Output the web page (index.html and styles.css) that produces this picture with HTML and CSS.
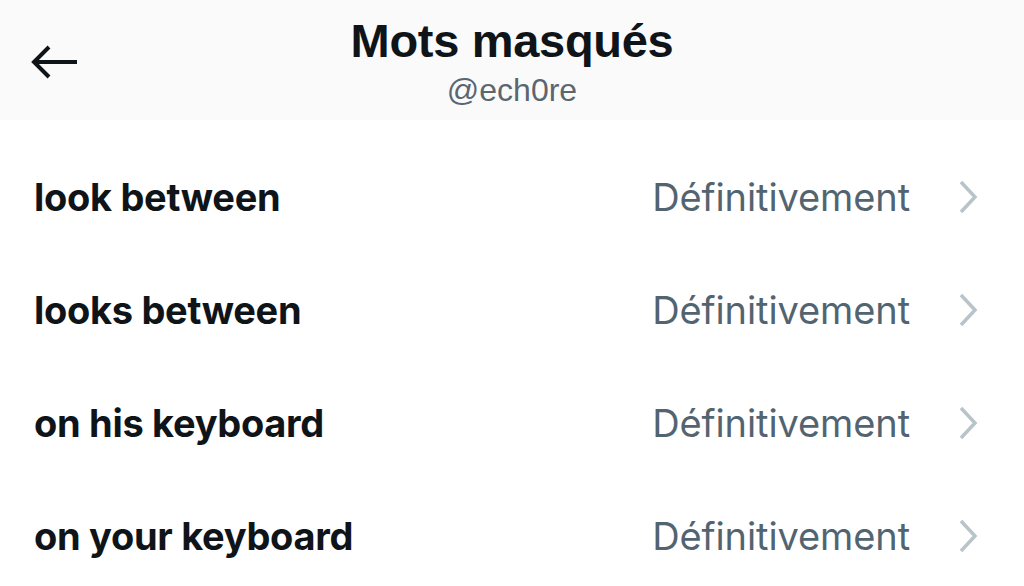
FILE: index.html
```html
<!DOCTYPE html>
<html lang="fr">
<head>
<meta charset="utf-8">
<link rel="stylesheet" href="styles.css">
</head>
<body>
<header class="header">
  <div class="back">
    <svg width="50" height="34" viewBox="0 0 50 34" fill="none" stroke="#0f1419" stroke-width="4" stroke-linecap="butt">
      <path d="M47 17H5"/>
      <path d="M19 2L4 17L19 32"/>
    </svg>
  </div>
  <div class="titles">
    <div class="title">Mots masqués</div>
    <div class="handle">@ech0re</div>
  </div>
  <div class="spacer"></div>
</header>
<main class="list">
  <div class="row"><span class="word">look between</span><span class="dur">Définitivement</span><span class="chev"><svg width="20" height="34" viewBox="0 0 20 34" fill="none" stroke="#b9c3ca" stroke-width="3.5"><path d="M3 2L17 17L3 32"/></svg></span></div>
  <div class="row"><span class="word">looks between</span><span class="dur">Définitivement</span><span class="chev"><svg width="20" height="34" viewBox="0 0 20 34" fill="none" stroke="#b9c3ca" stroke-width="3.5"><path d="M3 2L17 17L3 32"/></svg></span></div>
  <div class="row"><span class="word">on his keyboard</span><span class="dur">Définitivement</span><span class="chev"><svg width="20" height="34" viewBox="0 0 20 34" fill="none" stroke="#b9c3ca" stroke-width="3.5"><path d="M3 2L17 17L3 32"/></svg></span></div>
  <div class="row"><span class="word">on your keyboard</span><span class="dur">Définitivement</span><span class="chev"><svg width="20" height="34" viewBox="0 0 20 34" fill="none" stroke="#b9c3ca" stroke-width="3.5"><path d="M3 2L17 17L3 32"/></svg></span></div>
</main>
</body>
</html>
```
FILE: styles.css
```css
html, body {
  margin: 0;
  padding: 0;
  background: #ffffff;
  width: 1024px;
  height: 586px;
  overflow: hidden;
}
body {
  font-family: "Liberation Sans", Arial, sans-serif;
  color: #0f1419;
}
.header {
  height: 120px;
  background: #fafafa;
  display: grid;
  grid-template-columns: 200px 1fr 200px;
  align-items: start;
}
.back {
  padding-left: 30px;
  padding-top: 45px;
  display: flex;
  align-items: center;
}
.titles {
  display: flex;
  flex-direction: column;
  align-items: center;
  padding-top: 15px;
}
.title {
  font-weight: 700;
  font-size: 47px;
  line-height: 52px;
  letter-spacing: -0.3px;
}
.handle {
  font-size: 32px;
  line-height: 36px;
  margin-top: 5px;
  color: #5b6670;
}
.list {
  padding-top: 20px;
}
.row {
  height: 113px;
  display: flex;
  align-items: center;
  padding: 0 46px 0 34px;
}
.word {
  flex: 1;
  font-family: "Inter", "Liberation Sans", sans-serif;
  font-weight: 700;
  font-size: 38px;
  letter-spacing: -0.3px;
}
.dur {
  font-family: "Inter", "Liberation Sans", sans-serif;
  font-size: 38px;
  color: #536471;
  letter-spacing: -0.1px;
}
.chev {
  margin-left: 48px;
  display: flex;
  align-items: center;
}
```
